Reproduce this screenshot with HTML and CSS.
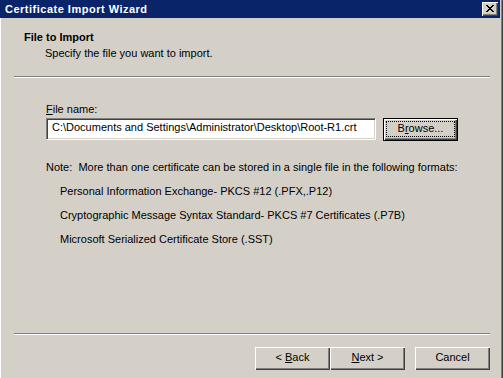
FILE: index.html
```html
<!DOCTYPE html>
<html>
<head>
<meta charset="utf-8">
<title>Certificate Import Wizard</title>
<link rel="stylesheet" href="styles.css">
</head>
<body>
<div class="window">
  <div class="main">
    <div class="titlebar">
      <span class="title">Certificate Import Wizard</span>
      <span class="close">
        <svg width="8" height="7" viewBox="0 0 8 7" shape-rendering="crispEdges">
          <rect x="0" y="0" width="2" height="1" fill="#000"/>
          <rect x="6" y="0" width="2" height="1" fill="#000"/>
          <rect x="1" y="1" width="2" height="1" fill="#000"/>
          <rect x="5" y="1" width="2" height="1" fill="#000"/>
          <rect x="2" y="2" width="4" height="1" fill="#000"/>
          <rect x="3" y="3" width="2" height="1" fill="#000"/>
          <rect x="2" y="4" width="4" height="1" fill="#000"/>
          <rect x="1" y="5" width="2" height="1" fill="#000"/>
          <rect x="5" y="5" width="2" height="1" fill="#000"/>
          <rect x="0" y="6" width="2" height="1" fill="#000"/>
          <rect x="6" y="6" width="2" height="1" fill="#000"/>
        </svg>
      </span>
    </div>
    <div class="panel">
      <div class="header">
        <div class="h-title">File to Import</div>
        <div class="h-sub">Specify the file you want to import.</div>
      </div>
      <div class="sep"></div>
      <div class="content">
        <div class="label"><u>F</u>ile name:</div>
        <div class="file-row">
          <div class="input">C:\Documents and Settings\Administrator\Desktop\Root-R1.crt</div>
          <div class="btn btn-default"><span>B<u>r</u>owse...</span></div>
        </div>
        <div class="note">Note:&nbsp; More than one certificate can be stored in a single file in the following formats:</div>
        <ul class="formats">
          <li>Personal Information Exchange- PKCS #12 (.PFX,.P12)</li>
          <li>Cryptographic Message Syntax Standard- PKCS #7 Certificates (.P7B)</li>
          <li>Microsoft Serialized Certificate Store (.SST)</li>
        </ul>
      </div>
      <div class="footer">
        <div class="sep"></div>
        <div class="buttons">
          <div class="btn"><span>&lt; <u>B</u>ack</span></div>
          <div class="btn"><span><u>N</u>ext &gt;</span></div>
          <div class="btn btn-cancel"><span>Cancel</span></div>
        </div>
      </div>
    </div>
  </div>
  <div class="frame-right"></div>
</div>
</body>
</html>
```

FILE: styles.css
```css
html, body {
  margin: 0;
  padding: 0;
  background: #d4d0c8;
}

body {
  font-family: "Liberation Sans", Arial, sans-serif;
  font-size: 11px;
  line-height: 13px;
  color: #000;
}

.window {
  display: flex;
  width: 503px;
  height: 378px;
  overflow: hidden;
}

.main {
  width: 500px;
  display: flex;
  flex-direction: column;
}

.frame-right {
  width: 1px;
  background: #808080;
  border-left: 1px solid #d4d0c8;
  border-right: 1px solid #404040;
}

.titlebar {
  height: 18px;
  background: #0a246a;
  display: flex;
  align-items: center;
  justify-content: space-between;
  padding: 0 2px 0 5px;
}

.title {
  color: #fff;
  font-weight: bold;
  letter-spacing: 0.5px;
}

.close {
  width: 16px;
  height: 14px;
  box-sizing: border-box;
  background: #d4d0c8;
  box-shadow: inset 1px 1px #fff, inset -1px -1px #404040, inset -2px -2px #808080;
  display: flex;
  align-items: center;
  justify-content: center;
  padding-bottom: 1px;
}

.close svg {
  display: block;
}

.panel {
  flex: 1;
  display: flex;
  flex-direction: column;
  border-left: 1px solid #fff;
}

.header {
  padding: 13px 0 16px 23px;
}

.h-title {
  font-weight: bold;
}

.h-sub {
  margin-top: 3px;
  padding-left: 21px;
}

.sep {
  height: 0;
  border-top: 1px solid #808080;
  border-bottom: 1px solid #fff;
  margin: 0 10px 0 13px;
}

.content {
  padding: 25px 0 0 45px;
}

.file-row {
  display: flex;
  align-items: flex-start;
  margin-top: 2px;
}

.input {
  width: 330px;
  height: 22px;
  box-sizing: border-box;
  background: #fff;
  border-top: 1px solid #808080;
  border-left: 1px solid #808080;
  border-bottom: 1px solid #fff;
  border-right: 1px solid #fff;
  box-shadow: inset 1px 1px #404040, inset -1px -1px #d4d0c8;
  padding: 2px 3px 0 5px;
  white-space: nowrap;
  overflow: hidden;
}

.btn {
  position: relative;
  width: 75px;
  height: 23px;
  box-sizing: border-box;
  background: #d4d0c8;
  box-shadow: inset 1px 1px #fff, inset -1px -1px #404040, inset -2px -2px #808080;
  display: flex;
  align-items: center;
  justify-content: center;
  padding-bottom: 2px;
  white-space: pre;
}

.btn-default {
  margin-left: 7px;
  border: 1px solid #000;
}

.btn-default::after {
  content: "";
  position: absolute;
  left: 2px;
  right: 2px;
  top: 2px;
  bottom: 3px;
  border: 1px dotted #000;
}

.note {
  margin-top: 20px;
}

.formats {
  list-style: none;
  margin: 0;
  padding: 0 0 0 14px;
}

.formats li {
  margin-top: 11px;
}

.footer {
  margin-top: auto;
  padding-bottom: 8px;
}

.buttons {
  display: flex;
  justify-content: flex-end;
  margin-top: 12px;
  padding-right: 10px;
}

.btn-cancel {
  margin-left: 10px;
}
```
